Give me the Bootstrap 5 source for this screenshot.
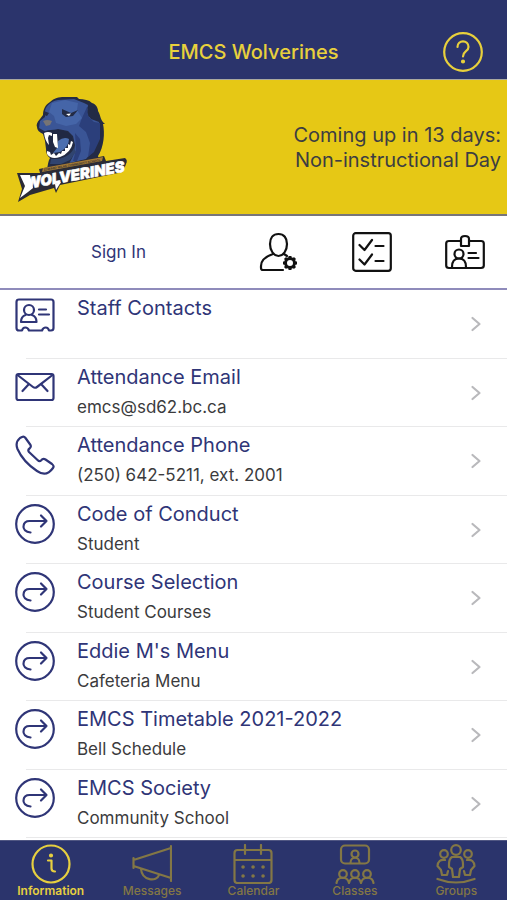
<!DOCTYPE html>
<html lang="en">
<head>
<meta charset="utf-8">
<meta name="viewport" content="width=device-width, initial-scale=1">
<title>EMCS Wolverines</title>
<link href="https://cdn.jsdelivr.net/npm/bootstrap@5.3.0/dist/css/bootstrap.min.css" rel="stylesheet">
<style>
  :root { --navy: #2b346c; --gold: #e6c815; --ink: #2f3577; }
  body { font-family: Inter, "Liberation Sans", sans-serif; background: #fff; }
  svg { fill: none; stroke: currentColor; stroke-width: 2.2; stroke-linecap: round; stroke-linejoin: round; flex: none; }
  .ico { width: 40px; height: 40px; display: block; }
  .app-head { background: var(--navy); color: #e8d03c; padding: 32px 24px 7px; border-bottom: 1px solid #aaa9a0; }
  .app-head h1 { font-size: 20px; line-height: 24px; font-weight: 500; }
  .side { width: 40px; }
  .plain { background: none; border: 0; padding: 0; color: inherit; }
  .banner { background: var(--gold); color: #3c3d42; border-bottom: 2px solid #77757a; padding: 11px 6px 5px 12px; }
  .crest { width: 120px; height: 118px; }
  .crest .word { font: italic 900 15px Inter, "Liberation Sans", sans-serif; stroke-width: .6; }
  .crest .tiny { font: 700 3px Inter, "Liberation Sans", sans-serif; }
  .notice { font-size: 20px; line-height: 25px; padding-bottom: 4px; }
  .tools { padding: 16px 22px 16px 0; border-bottom: 2px solid #8f8bbb; color: #111; }
  .signin { color: var(--ink); font-size: 17px; line-height: 24px; }
  .sign-cell { padding-right: 30px; }
  .tool-set { width: 226px; }
  .rows { padding-bottom: 2px; }
  .entry { flex: 1 0 68px; padding: 0 25px 0 15px; color: var(--ink); position: relative; }
  .entry::after { content: ""; position: absolute; left: 26px; right: 0; bottom: 0; height: 1px; background: #e9e9ea; }
  .entry .ico { margin-top: 8px; margin-right: 22px; }
  .entry .name { font-size: 20px; line-height: 24px; margin-top: 6px; }
  .entry .info { font-size: 17px; line-height: 20px; margin-top: 8px; color: #3b3b3d; }
  .chev { width: 12px; height: 16px; color: #b9b9bc; }
  .tabs { background: var(--navy); height: 60px; padding-top: 3px; border-top: 1px solid #515783; }
  .tabs a { color: #837745; font-size: 12px; line-height: 13px; font-weight: 500; }
  .tabs a.active { color: #e6cf40; font-weight: 600; }
</style>
<script src="https://cdn.jsdelivr.net/npm/bootstrap@5.3.0/dist/js/bootstrap.bundle.min.js"></script>
</head>
<body>
<svg class="d-none" aria-hidden="true">
  <symbol id="i-go" viewBox="0 0 40 40"><circle cx="20" cy="20" r="18.800"/><path d="M15.500 28.500C10.500 28 8 25 8.500 22C9 18.500 11 17 14.500 17H31.500M26 11.500L31.500 17L26 22.500"/></symbol>
  <symbol id="i-chev" viewBox="0 0 12 16"><path d="M2.500 2L9.500 8L2.500 14"/></symbol>
</svg>
<div class="d-flex flex-column min-vh-100">
  <header class="app-head d-flex align-items-center justify-content-between">
    <span class="side"></span>
    <h1 class="m-0">EMCS Wolverines</h1>
    <button class="plain" type="button" aria-label="Help"><svg class="ico" viewBox="0 0 40 40"><circle cx="20" cy="20" r="18.800"/><path d="M14.500 15C14.500 7.500 25.500 7.500 25.500 15C25.500 19.500 20 19 20 24.500"/><circle cx="20" cy="29.500" r="1" fill="currentColor"/></svg></button>
  </header>

  <section class="banner d-flex align-items-center justify-content-between">
    <svg class="crest" viewBox="0 0 120 118" role="img" aria-label="Wolverines crest">
      <g stroke="none">
        <path fill="#232b45" d="M35 78C36 74 36 70 38 67C35 65 34 62 34 58L33 50L31 43C27 41 25 39 25 36C24 34 25 31 28 28L31 24C31 19 33 14 38 11C42 7 47 6 52 6H65L67 8C72 8 77 9 80 12C84 13 86 17 86 20C89 25 88 29 93 33L91 33C93 42 92 56 86 65L87 69L40 79Z"/>
        <path fill="#3a5596" d="M33 20C34 14 40 10 46 9L62 8L72 12L76 14L75 22L79 28L87 31L86 47L80 61L74 68L62 71L57 73L61 65L63 54L61 45L56 40L46 38L34 41L27 37L28 30L33 26Z"/>
        <path fill="#2b3f7b" d="M75 16L76 25L82 31L88 32L88 48L82 61L76 66L78 52L74 41L67 35L70 27Z"/>
        <path fill="#4565a8" d="M40 12L53 9L66 12L65 19L70 27L64 33L54 35L44 32L42 25L37 21Z"/>
        <path fill="#2b3f7b" d="M63 42L68 48L69 60L65 70L61 70L64 59Z"/>
        <path fill="#232b45" d="M50 18L59 22L66 19L61 25L54 26L50 23ZM32 20L37 22L35 25L32 24ZM75 17C80 13 85 17 82 22L79 27L76 25L79 19Z"/>
        <path fill="#fff" d="M54 23L59 22.500L57 25Z"/>
        <path fill="#777474" d="M31 30Q35 28 40 30L38 34L34 35Z"/>
        <path fill="#202843" d="M31 41Q39 37 52 40Q62 43 60 54Q55 66 42 67L35 62L37 52Z"/>
        <path fill="#4c6fb0" d="M46 50Q52 45 57 48Q57 56 48 61L41 62L45 57Z"/>
        <path fill="#fff" d="M32 42Q36 40 40 42L40 45L37 44L36 47L37 54Q33 50 32 42ZM41 43L45 43L46 57L43 56L41 51ZM35 60L38 61L39 64L42 62L44 65L47 62L49 63L50 60L53 60L53 57L56 57L56 53L58 54L59 50L61 51Q59 62 48 66Q39 69 35 63Z"/>
        <path fill="#30446f" d="M39 68Q56 69 62 57L64 61L58 69L49 73L38 73Z"/>
        <path fill="#2b2b36" d="M27 78L92 65L94 70L113 67Q116 69 114 73L111 81L48 94L44 102L42 97L18 104L6 111L10 98L5 82L28 82Z"/>
        <path fill="#a47b36" d="M31 77L91 66L90 70L30 81Z"/>
        <path fill="#fff" d="M8 84L18 84L21 97L16 101L8 107L13 95ZM43 93L49 91L44 99Z"/>
      </g>
      <text class="tiny" x="32" y="80" transform="rotate(-10 32 80)" fill="#3a3230" stroke="none">EDWARD MILNE COMMUNITY SCHOOL</text>
      <text class="word" x="14" y="98" transform="rotate(-10 14 98)" fill="#fff" stroke="#fff">WOLVERINES</text>
    </svg>
    <p class="notice m-0 text-end">Coming up in 13 days:<br>Non-instructional Day</p>
  </section>

  <section class="tools d-flex align-items-center">
    <div class="sign-cell flex-grow-1 text-center"><a class="signin text-decoration-none ps-2" href="#">Sign In</a></div>
    <div class="tool-set d-flex justify-content-between">
      <button class="plain" type="button" aria-label="Account settings"><svg class="ico" viewBox="0 0 40 40"><path d="M19.500 2C14 2 11 6 11 12C11 18 14.500 24 19.500 24C24.500 24 28 18 28 12C28 6 25 2 19.500 2ZM14 22C8 24 2 27 2 34V36Q2 38 4 38H24M25 22L28 24"/><circle cx="31" cy="31" r="4.500" stroke-width="3"/><path stroke-width="3" stroke-linecap="butt" d="M31 27V24M31 35V38M27 31H24M35 31H38M28 28L26 26M34 28L36 26M28 34L26 36M34 34L36 36"/></svg></button>
      <button class="plain" type="button" aria-label="Checklist"><svg class="ico" viewBox="0 0 40 40"><rect x="1.200" y="1.200" width="37.600" height="37.600" rx="2.500"/><path d="M7.500 13L12.500 18L20 8M23.500 14H31.500M7.500 27.500L12.500 32.500L20 22.500M23.500 29H31.500"/></svg></button>
      <button class="plain" type="button" aria-label="ID card"><svg class="ico" viewBox="0 0 40 40"><path d="M15 9H4Q1.200 9 1.200 11.500V33.500Q1.200 36 4 36H36Q38.800 36 38.800 33.500V11.500Q38.800 9 36 9H25"/><path d="M16 14V7Q16 4 20 4Q24 4 24 7V14ZM7 35Q7 26.500 14 26.500Q21 26.500 21 35M23.500 21H31M23.500 26H33.500"/><circle cx="14" cy="22" r="4.500"/></svg></button>
    </div>
  </section>

  <main class="rows d-flex flex-column flex-grow-1">
    <a class="entry d-flex text-decoration-none" href="#">
      <svg class="ico" viewBox="0 0 40 40"><path d="M4 1.500H36Q38.500 1.500 38.500 4V30Q38.500 32.500 36 32.500H34C33 28.500 28.500 28.500 27 32.500H14C12.500 28.500 8 28.500 7 32.500H4Q1.500 32.500 1.500 30V4Q1.500 1.500 4 1.500Z"/><circle cx="14" cy="12" r="5"/><path d="M10.500 17C7.500 18 6 21 6 24H21.500C21.500 21 20 18 17 17M24 11.500H31M24 16.500H34"/></svg>
      <div class="flex-grow-1"><div class="name">Staff Contacts</div></div>
      <svg class="chev align-self-center"><use href="#i-chev"/></svg>
    </a>
    <a class="entry d-flex text-decoration-none" href="#">
      <svg class="ico" viewBox="0 0 40 40"><rect x="1.500" y="7" width="37" height="26" rx="2"/><path d="M2.500 8L18 20Q20 21.500 22 20L37.500 8M7.500 24L13.500 17.500M32.500 24L26.500 17.500"/></svg>
      <div class="flex-grow-1"><div class="name">Attendance Email</div><div class="info">emcs@sd62.bc.ca</div></div>
      <svg class="chev align-self-center"><use href="#i-chev"/></svg>
    </a>
    <a class="entry d-flex text-decoration-none" href="#">
      <svg class="ico" viewBox="0 0 40 40"><path d="M5 3L7 2Q9 1 10.500 3L15.500 10Q16.500 12 14.500 13.500Q12.500 15 14 17L22.500 25Q24.500 27 26 25.500Q28 23 30.500 24.500L37 29Q39.500 31 38 33C33 40 28 40 22 36C13 30 6 22 2.500 14C.5 9 1.500 6 5 3Z"/></svg>
      <div class="flex-grow-1"><div class="name">Attendance Phone</div><div class="info">(250) 642-5211, ext. 2001</div></div>
      <svg class="chev align-self-center"><use href="#i-chev"/></svg>
    </a>
    <a class="entry d-flex text-decoration-none" href="#">
      <svg class="ico"><use href="#i-go"/></svg>
      <div class="flex-grow-1"><div class="name">Code of Conduct</div><div class="info">Student</div></div>
      <svg class="chev align-self-center"><use href="#i-chev"/></svg>
    </a>
    <a class="entry d-flex text-decoration-none" href="#">
      <svg class="ico"><use href="#i-go"/></svg>
      <div class="flex-grow-1"><div class="name">Course Selection</div><div class="info">Student Courses</div></div>
      <svg class="chev align-self-center"><use href="#i-chev"/></svg>
    </a>
    <a class="entry d-flex text-decoration-none" href="#">
      <svg class="ico"><use href="#i-go"/></svg>
      <div class="flex-grow-1"><div class="name">Eddie M's Menu</div><div class="info">Cafeteria Menu</div></div>
      <svg class="chev align-self-center"><use href="#i-chev"/></svg>
    </a>
    <a class="entry d-flex text-decoration-none" href="#">
      <svg class="ico"><use href="#i-go"/></svg>
      <div class="flex-grow-1"><div class="name">EMCS Timetable 2021-2022</div><div class="info">Bell Schedule</div></div>
      <svg class="chev align-self-center"><use href="#i-chev"/></svg>
    </a>
    <a class="entry d-flex text-decoration-none" href="#">
      <svg class="ico"><use href="#i-go"/></svg>
      <div class="flex-grow-1"><div class="name">EMCS Society</div><div class="info">Community School</div></div>
      <svg class="chev align-self-center"><use href="#i-chev"/></svg>
    </a>
  </main>

  <nav class="tabs row row-cols-5 g-0 text-center">
    <a class="active text-decoration-none d-flex flex-column align-items-center" href="#"><svg class="ico" viewBox="0 0 40 40"><circle cx="20" cy="20" r="18.500"/><path d="M17 16.500H20.500V24.500Q20.500 27.500 24 27.500"/><circle cx="20" cy="11.500" r="1" fill="currentColor"/></svg>Information</a>
    <a class="text-decoration-none d-flex flex-column align-items-center" href="#"><svg class="ico" viewBox="0 0 40 40"><path d="M1.500 14V24M1.500 16L39 4M1.500 22L39 34M39 2V37M9 25C10 37 25 38 27 31"/></svg>Messages</a>
    <a class="text-decoration-none d-flex flex-column align-items-center" href="#"><svg class="ico" viewBox="0 0 40 40"><rect x="1.500" y="6" width="37" height="33" rx="3"/><path d="M2 16H38M12 1V10M28 1V10"/><path stroke-width="3.500" d="M10 23H10.100M20 23H20.100M30 23H30.100M10 32H10.100M20 32H20.100M30 32H30.100"/></svg>Calendar</a>
    <a class="text-decoration-none d-flex flex-column align-items-center" href="#"><svg class="ico" viewBox="0 0 40 40"><rect x="6" y="1.500" width="28" height="18" rx="4"/><circle cx="20" cy="10" r="3.500"/><path d="M15.500 19C15.500 12 24.500 12 24.500 19M1.500 39C2.500 32 12.500 32 14 39C15.500 32 24.500 32 26 39C27.500 32 37.500 32 38.500 39"/><circle cx="8" cy="30" r="3.800"/><circle cx="20" cy="30" r="3.800"/><circle cx="32" cy="30" r="3.800"/></svg>Classes</a>
    <a class="text-decoration-none d-flex flex-column align-items-center" href="#"><svg class="ico" viewBox="0 0 40 40"><circle cx="20" cy="6" r="4.800"/><circle cx="8" cy="10" r="3.800"/><circle cx="32" cy="10" r="3.800"/><path d="M16 13Q13 15 13 20V23L16 25L17 33H23L24 25L27 23V20Q27 15 24 13ZM9 16Q2 15 1.500 22L5 26L6 31H11L12 27M31 16Q38 15 38.500 22L35 26L34 31H29L28 27M1.500 35Q20 42 38.500 35"/></svg>Groups</a>
  </nav>
</div>
</body>
</html>
